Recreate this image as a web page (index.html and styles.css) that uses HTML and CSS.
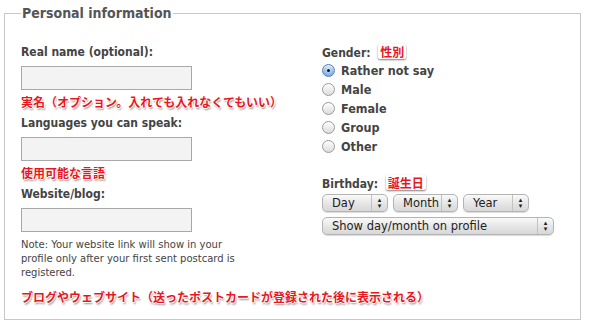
FILE: index.html
```html
<!DOCTYPE html>
<html lang="en">
<head>
  <meta charset="UTF-8">
  <title>Personal information</title>
  <link rel="stylesheet" href="styles.css">
</head>
<body>
  <fieldset class="panel">
    <legend>Personal information</legend>
    <div class="columns">
      <div class="col-left">
        <label class="field-label" for="realname">Real name (optional):</label>
        <input type="text" id="realname" class="text-input">
        <div class="note-jp">実名（オプション。入れても入れなくてもいい）</div>

        <label class="field-label" for="languages">Languages you can speak:</label>
        <input type="text" id="languages" class="text-input">
        <div class="note-jp">使用可能な言語</div>

        <label class="field-label" for="website">Website/blog:</label>
        <input type="text" id="website" class="text-input">
        <p class="hint">Note: Your website link will show in your profile only after your first sent postcard is registered.</p>
        <div class="note-jp note-last">ブログやウェブサイト（送ったポストカードが登録された後に表示される）</div>
      </div>

      <div class="col-right">
        <div class="field-label">Gender: <span class="badge-jp">性別</span></div>
        <ul class="radios">
          <li><span class="radio checked"></span>Rather not say</li>
          <li><span class="radio"></span>Male</li>
          <li><span class="radio"></span>Female</li>
          <li><span class="radio"></span>Group</li>
          <li><span class="radio"></span>Other</li>
        </ul>

        <div class="field-label birthday">Birthday: <span class="badge-jp">誕生日</span></div>
        <div class="select-row">
          <span class="select w-day">Day</span>
          <span class="select w-month">Month</span>
          <span class="select w-year">Year</span>
        </div>
        <span class="select w-show">Show day/month on profile</span>
      </div>
    </div>
  </fieldset>
</body>
</html>
```

FILE: styles.css
```css
body {
  margin: 0;
  background-color: #fff;
  font-family: "DejaVu Sans", Verdana, sans-serif;
  color: #444;
}
.panel {
  margin: 5px 9px 0 4px;
  padding: 23px 16px 0 16px;
  height: 315px;
  border: 1px solid #c8c8c8;
  box-sizing: border-box;
}
.panel legend {
  padding: 0 1px;
  font-family: "DejaVu Sans Condensed", "DejaVu Sans", sans-serif;
  font-stretch: condensed;
  font-size: 14px;
  font-weight: bold;
  color: #555;
}
.columns {
  display: grid;
  grid-template-columns: 301px 1fr;
}
.field-label {
  display: block;
  font-family: "DejaVu Sans Condensed", "DejaVu Sans", sans-serif;
  font-stretch: condensed;
  font-size: 12px;
  font-weight: bold;
  color: #444;
  height: 16px;
  line-height: 16px;
}
.col-left .field-label {
  margin-bottom: 6px;
}
.text-input {
  display: block;
  width: 171px;
  height: 24px;
  box-sizing: border-box;
  margin: 0;
  border: 1px solid #a8a8a8;
  background-color: #f3f3f3;
}
.note-jp {
  font-family: "Noto Sans CJK JP", sans-serif;
  font-weight: bold;
  font-size: 12px;
  line-height: 16px;
  color: #e8171e;
  margin: 4px 0 5px 0;
  white-space: nowrap;
  text-shadow: 1px 0 0 #fff, -1px 0 0 #fff, 0 1px 0 #fff, 0 -1px 0 #fff, 1px 2px 2px rgba(0, 0, 0, 0.45);
}
.hint {
  font-size: 10px;
  line-height: 14px;
  margin: 6px 0 0 0;
  width: 215px;
}
.note-last {
  margin-top: 9px;
}
.badge-jp {
  display: inline-block;
  font-family: "Noto Sans CJK JP", sans-serif;
  font-weight: bold;
  font-size: 12px;
  line-height: 15px;
  color: #e8171e;
  background-color: #fff;
  padding: 0 2px;
  margin-left: 4px;
  border-radius: 2px;
  box-shadow: 0 1px 2px rgba(0, 0, 0, 0.5);
}
.radios {
  list-style: none;
  margin: 1px 0 0 0;
  padding: 0;
}
.radios li {
  display: flex;
  align-items: center;
  gap: 6px;
  height: 19px;
  font-family: "DejaVu Sans Condensed", "DejaVu Sans", sans-serif;
  font-stretch: condensed;
  font-size: 12.5px;
  font-weight: bold;
  color: #444;
}
.radio {
  width: 13px;
  height: 13px;
  border-radius: 50%;
  box-sizing: border-box;
  border: 1px solid #9a9a9a;
  background: linear-gradient(#fdfdfd, #dcdcdc);
  box-shadow: inset 0 1px 1px rgba(255, 255, 255, 0.8);
  position: relative;
}
.radio.checked {
  border-color: #5a7fb0;
  background: radial-gradient(circle at 50% 30%, #d7e9fb, #84b3e6 70%, #6a9fd8);
}
.radio.checked::after {
  content: "";
  position: absolute;
  left: 4px;
  top: 4px;
  width: 3px;
  height: 3px;
  border-radius: 50%;
  background-color: #111;
}
.birthday {
  margin-top: 19px;
  margin-bottom: 3px;
}
.select-row {
  display: flex;
  gap: 5px;
  margin-bottom: 5px;
}
.select {
  display: block;
  position: relative;
  height: 18px;
  line-height: 17px;
  box-sizing: border-box;
  padding-left: 9px;
  font-size: 11.5px;
  color: #222;
  border-radius: 5px;
  border: 1px solid #b4b4b4;
  background: linear-gradient(#fafafa, #e3e3e3 60%, #d8d8d8);
  box-shadow: 0 1px 1px rgba(0, 0, 0, 0.15);
}
.select::after {
  content: "▴\A▾";
  white-space: pre;
  position: absolute;
  right: 0;
  top: 0;
  width: 16px;
  height: 16px;
  border-left: 1px solid #c2c2c2;
  font-size: 7px;
  line-height: 6px;
  padding-top: 2px;
  box-sizing: border-box;
  text-align: center;
  color: #222;
}
.w-day { width: 66px; }
.w-month { width: 65px; }
.w-year { width: 66px; }
.w-show { width: 232px; }
```
